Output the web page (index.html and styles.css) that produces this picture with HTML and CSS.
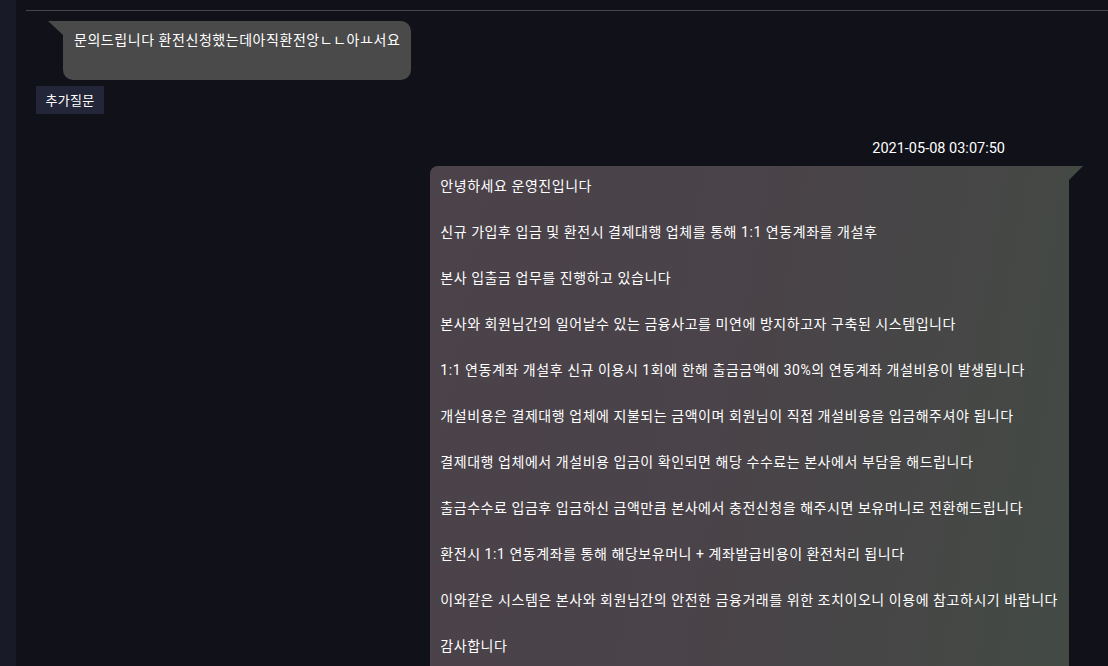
FILE: index.html
```html
<!DOCTYPE html>
<html lang="ko">
<head>
<meta charset="utf-8">
<title>문의</title>
<link rel="stylesheet" href="styles.css">
</head>
<body>
<div class="page">
  <aside class="strip"></aside>
  <main class="main">
    <section class="chat">
      <div class="row-user">
        <div class="bubble-user">문의드립니다 환전신청했는데아직환전앙ㄴㄴ아ㅛ서요<br><br></div>
      </div>
      <div class="actions">
        <button class="btn-more">추가질문</button>
      </div>
      <div class="row-admin">
        <div class="stamp">2021-05-08 03:07:50</div>
        <div class="bubble-admin">
          <p>안녕하세요 운영진입니다</p>
          <p>신규 가입후 입금 및 환전시 결제대행 업체를 통해 1:1 연동계좌를 개설후</p>
          <p>본사 입출금 업무를 진행하고 있습니다</p>
          <p>본사와 회원님간의 일어날수 있는 금융사고를 미연에 방지하고자 구축된 시스템입니다</p>
          <p>1:1 연동계좌 개설후 신규 이용시 1회에 한해 출금금액에 30%의 연동계좌 개설비용이 발생됩니다</p>
          <p>개설비용은 결제대행 업체에 지불되는 금액이며 회원님이 직접 개설비용을 입금해주셔야 됩니다</p>
          <p>결제대행 업체에서 개설비용 입금이 확인되면 해당 수수료는 본사에서 부담을 해드립니다</p>
          <p>출금수수료 입금후 입금하신 금액만큼 본사에서 충전신청을 해주시면 보유머니로 전환해드립니다</p>
          <p>환전시 1:1 연동계좌를 통해 해당보유머니 + 계좌발급비용이 환전처리 됩니다</p>
          <p>이와같은 시스템은 본사와 회원님간의 안전한 금융거래를 위한 조치이오니 이용에 참고하시기 바랍니다</p>
          <p>감사합니다</p>
        </div>
      </div>
    </section>
  </main>
</div>
</body>
</html>
```
FILE: styles.css
```css
* { box-sizing: border-box; }
html, body {
  margin: 0;
  height: 100%;
  background: #101119;
  color: #ffffff;
  font-family: Roboto, "Noto Sans CJK KR", sans-serif;
  font-size: 14px;
  overflow: hidden;
}
.page {
  display: flex;
  height: 666px;
}
.strip {
  width: 16px;
  flex: none;
  background: #181b27;
}
.main {
  flex: 1;
  padding: 10px 0 0 10px;
}
.chat {
  border-top: 1px solid #464646;
  display: flex;
  flex-direction: column;
}
.row-user {
  display: flex;
  padding: 10px 0 0 22px;
}
.bubble-user {
  position: relative;
  margin-left: 15px;
  background: #4a4a4a;
  border-radius: 0 10px 10px 10px;
  padding: 8px 11px 5px 11px;
  line-height: 23px;
  letter-spacing: 0.55px;
}
.bubble-user::before {
  content: "";
  position: absolute;
  left: -15px;
  top: 0;
  border-top: 14px solid #4a4a4a;
  border-left: 15px solid transparent;
}
.actions {
  display: flex;
  padding: 6px 0 0 10px;
}
.btn-more {
  display: block;
  background: #222638;
  color: #ffffff;
  border: 0;
  height: 28px;
  width: 68px;
  padding: 0;
  font-family: "Noto Sans CJK KR", sans-serif;
  font-size: 13px;
  letter-spacing: 0.3px;
  line-height: 28px;
  cursor: pointer;
}
.row-admin {
  display: flex;
  flex-direction: column;
  align-items: flex-end;
  padding: 26px 39px 0 0;
}
.stamp {
  margin-right: 64px;
  font-family: Roboto, sans-serif;
  font-size: 14.5px;
  line-height: 18px;
  margin-bottom: 8px;
}
.bubble-admin {
  position: relative;
  background: linear-gradient(100deg, #4b424a 0%, #4a4349 45%, #434a44 100%);
  border-radius: 8px 0 8px 8px;
  padding: 9px 11px 20px 10px;
  line-height: 23px;
  letter-spacing: 0.55px;
}
.bubble-admin::after {
  content: "";
  position: absolute;
  right: -14px;
  top: 0;
  border-top: 14px solid #434a44;
  border-right: 14px solid transparent;
}
.bubble-admin p {
  margin: 0 0 23px 0;
  white-space: nowrap;
}
```
